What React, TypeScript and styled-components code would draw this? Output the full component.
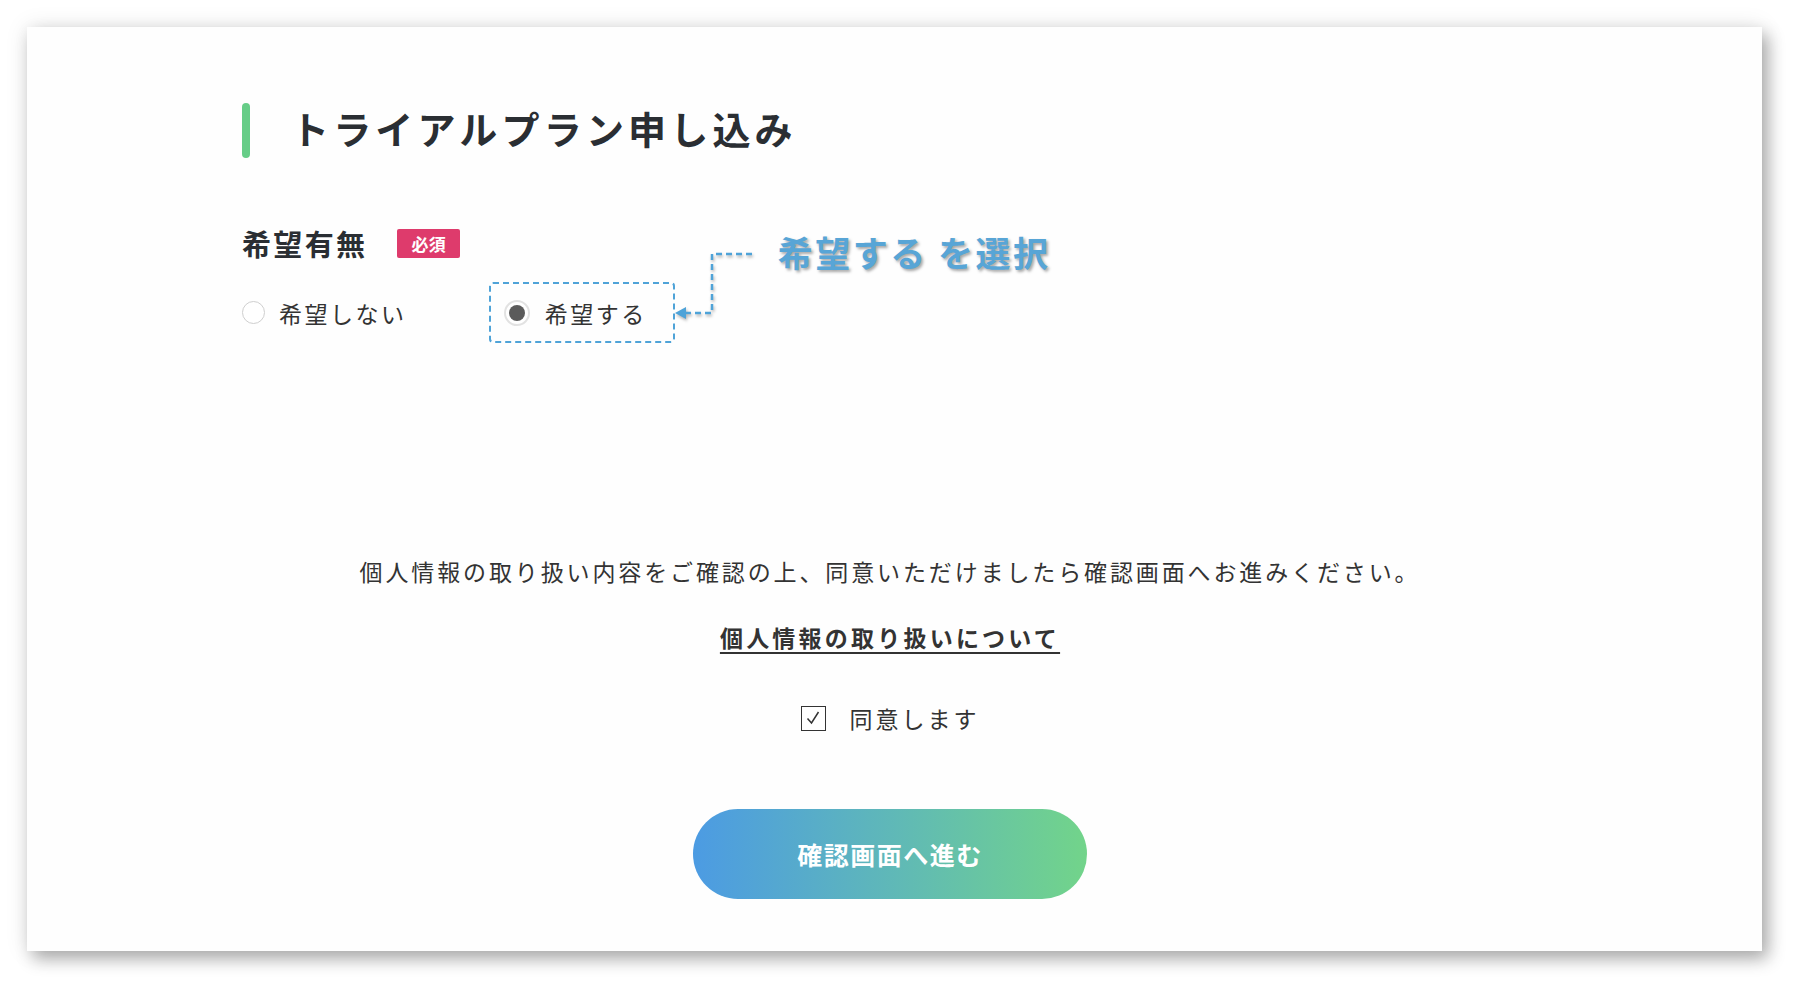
import React from "react";
import styled, { createGlobalStyle } from "styled-components";

const GlobalStyle = createGlobalStyle`
  html, body { margin: 0; padding: 0; background: #ffffff; }
  body { font-family: "Noto Sans CJK JP", "Noto Sans", sans-serif; color: #333; }
  * { box-sizing: border-box; }
`;

const Page = styled.div`
  width: 1798px;
  height: 986px;
  padding: 27px 36px 35px 27px;
`;

const Card = styled.main`
  width: 1735px;
  height: 924px;
  background: #fefefe;
  box-shadow: 6px 8px 16px rgba(0, 0, 0, 0.3), 0 0 22px rgba(0, 0, 0, 0.1);
  padding: 76px 224px 0 215px;
  display: flex;
  flex-direction: column;
`;

const TitleRow = styled.div`
  display: flex;
  align-items: center;
  height: 55px;
`;

const AccentBar = styled.span`
  width: 8px;
  height: 55px;
  border-radius: 4px;
  background: #66cd87;
  flex: none;
`;

const Title = styled.h1`
  margin: 0 0 0 41px;
  padding-bottom: 6px;
  font-size: 38px;
  line-height: 49px;
  font-weight: 700;
  letter-spacing: 0.11em;
  color: #2a2e33;
`;

const FieldHead = styled.div`
  display: flex;
  align-items: center;
  margin-top: 71px;
  height: 29px;
`;

const FieldLabel = styled.span`
  font-size: 29px;
  line-height: 29px;
  font-weight: 700;
  letter-spacing: 0.08em;
  color: #2a2e33;
`;

const RequiredBadge = styled.span`
  margin-left: 30px;
  width: 63px;
  height: 29px;
  border-radius: 2px;
  background: #de3b6c;
  color: #fff;
  font-size: 17px;
  font-weight: 700;
  display: flex;
  align-items: center;
  justify-content: center;
  letter-spacing: 0.02em;
`;

const RadioRow = styled.div`
  display: flex;
  align-items: center;
  margin-top: 24px;
  height: 61px;
`;

const RadioOption = styled.label<{ $highlight?: boolean }>`
  position: relative;
  display: flex;
  align-items: center;
  height: 61px;
  padding: ${(p) => (p.$highlight ? "0 26px 0 13px" : "0")};
  margin-left: ${(p) => (p.$highlight ? "82px" : "0")};
  border: ${(p) => (p.$highlight ? "2px dashed #4fa3d8" : "none")};
  border-radius: 4px;
  font-size: 23px;
  letter-spacing: 0.11em;
  color: #333;
`;

const RadioCircle = styled.span<{ $checked?: boolean }>`
  width: ${(p) => (p.$checked ? "26px" : "23px")};
  height: ${(p) => (p.$checked ? "26px" : "23px")};
  border-radius: 50%;
  border: ${(p) => (p.$checked ? "2px solid #e2e2e2" : "1px solid #cfcfcf")};
  background: #fff;
  margin-right: ${(p) => (p.$checked ? "15px" : "14px")};
  display: flex;
  align-items: center;
  justify-content: center;
  flex: none;
  &::after {
    content: "";
    display: ${(p) => (p.$checked ? "block" : "none")};
    width: 16px;
    height: 16px;
    border-radius: 50%;
    background: #5b5b5b;
  }
`;

const Annotation = styled.div`
  position: absolute;
  left: calc(100% + 2px);
  top: -41px;
  display: flex;
  align-items: flex-start;
  pointer-events: none;
`;

const Connector = styled.svg`
  flex: none;
  filter: drop-shadow(1px 2px 1.5px rgba(0, 0, 0, 0.3));
`;

const AnnotationText = styled.span`
  margin-left: 25px;
  margin-top: -11px;
  font-size: 35px;
  line-height: 40px;
  font-weight: 700;
  letter-spacing: 0.07em;
  white-space: nowrap;
  color: #58a5d6;
  text-shadow: 2px 2px 3px rgba(0, 0, 0, 0.35);
`;

const Agreement = styled.section`
  display: flex;
  flex-direction: column;
  align-items: center;
  margin-top: 212px;
`;

const Notice = styled.p`
  margin: 0;
  font-size: 23px;
  line-height: 32px;
  letter-spacing: 0.125em;
  color: #333;
`;

const PolicyLink = styled.a`
  margin-top: 34px;
  font-size: 23px;
  line-height: 32px;
  font-weight: 700;
  letter-spacing: 0.14em;
  color: #333;
  text-decoration: underline;
  text-decoration-thickness: 2px;
  text-underline-offset: 5px;
`;

const ConsentRow = styled.label`
  margin-top: 49px;
  display: flex;
  align-items: center;
  height: 32px;
  font-size: 23px;
  letter-spacing: 0.13em;
  color: #333;
`;

const CheckBox = styled.span`
  width: 25px;
  height: 25px;
  border: 1.5px solid #333;
  margin-right: 24px;
  display: flex;
  align-items: center;
  justify-content: center;
  background: #fff;
`;

const SubmitButton = styled.button`
  margin-top: 75px;
  width: 394px;
  height: 90px;
  border: none;
  border-radius: 45px;
  background: linear-gradient(90deg, #4c9be3 0%, #5fb8b8 50%, #72d48a 100%);
  color: #fff;
  font-family: "Noto Sans CJK JP", "Noto Sans", sans-serif;
  font-size: 25px;
  font-weight: 700;
  letter-spacing: 0.06em;
  cursor: pointer;
`;

export default function App() {
  return (
    <>
      <GlobalStyle />
      <Page>
        <Card>
          <TitleRow>
            <AccentBar />
            <Title>トライアルプラン申し込み</Title>
          </TitleRow>

          <FieldHead>
            <FieldLabel>希望有無</FieldLabel>
            <RequiredBadge>必須</RequiredBadge>
          </FieldHead>

          <RadioRow>
            <RadioOption>
              <RadioCircle />
              希望しない
            </RadioOption>
            <RadioOption $highlight>
              <RadioCircle $checked />
              希望する
              <Annotation>
                <Connector width="78" height="82" viewBox="0 0 78 82">
                  <path
                    d="M10 70 H37 V11 H78"
                    fill="none"
                    stroke="#4fa3d8"
                    strokeWidth="2.5"
                    strokeDasharray="6 4"
                  />
                  <path d="M0 70 L11 64 L11 76 Z" fill="#4fa3d8" />
                </Connector>
                <AnnotationText>希望する を選択</AnnotationText>
              </Annotation>
            </RadioOption>
          </RadioRow>

          <Agreement>
            <Notice>
              個人情報の取り扱い内容をご確認の上、同意いただけましたら確認画面へお進みください。
            </Notice>
            <PolicyLink href="#">個人情報の取り扱いについて</PolicyLink>
            <ConsentRow>
              <CheckBox>
                <svg width="16" height="16" viewBox="0 0 16 16">
                  <path d="M2.5 8.5 L6.5 13 L13.5 2" fill="none" stroke="#333" strokeWidth="1.5" />
                </svg>
              </CheckBox>
              同意します
            </ConsentRow>
            <SubmitButton>確認画面へ進む</SubmitButton>
          </Agreement>
        </Card>
      </Page>
    </>
  );
}
